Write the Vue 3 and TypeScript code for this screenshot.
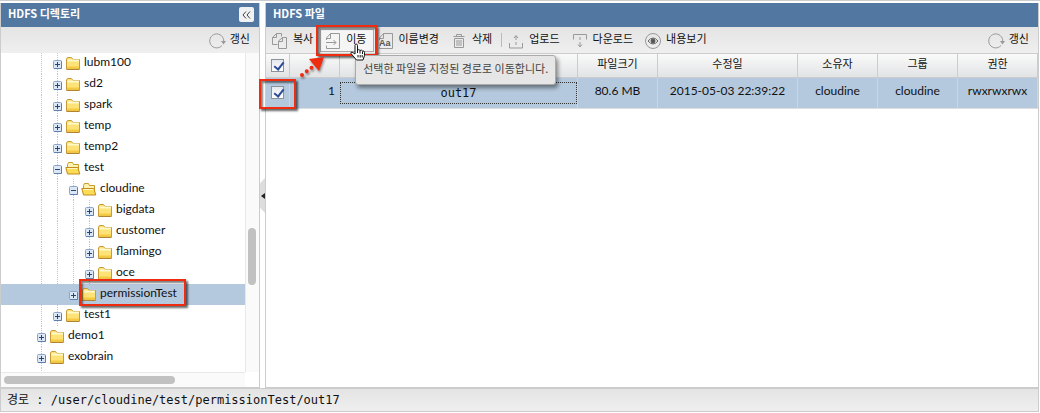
<script setup lang="ts">
interface TreeRow {
  name: string
  depth: number
  lines: number
  open?: boolean
  selected?: boolean
}

const rows: TreeRow[] = [
  { name: 'lubm100', depth: 3, lines: 1 },
  { name: 'sd2', depth: 3, lines: 1 },
  { name: 'spark', depth: 3, lines: 1 },
  { name: 'temp', depth: 3, lines: 1 },
  { name: 'temp2', depth: 3, lines: 1 },
  { name: 'test', depth: 3, lines: 1, open: true },
  { name: 'cloudine', depth: 4, lines: 2, open: true },
  { name: 'bigdata', depth: 5, lines: 3 },
  { name: 'customer', depth: 5, lines: 3 },
  { name: 'flamingo', depth: 5, lines: 3 },
  { name: 'oce', depth: 5, lines: 3 },
  { name: 'permissionTest', depth: 4, lines: 2, selected: true },
  { name: 'test1', depth: 3, lines: 1 },
  { name: 'demo1', depth: 2, lines: 0 },
  { name: 'exobrain', depth: 2, lines: 0 },
  { name: 'hdfs', depth: 2, lines: 0 },
]

const columns = ['파일크기', '수정일', '소유자', '그룹', '권한']
const cells = ['80.6 MB', '2015-05-03 22:39:22', 'cloudine', 'cloudine', 'rwxrwxrwx']
</script>

<template>
  <div class="app">
    <main class="body">
      <section class="panel side">
        <header class="title">
          <h2>HDFS 디렉토리</h2>
          <button class="collapse" aria-label="접기">
            <svg width="9" height="8" viewBox="0 0 9 8"><path d="M4 .5 1 4l3 3.500M8 .5 5 4l3 3.500" /></svg>
          </button>
        </header>
        <div class="toolbar end">
          <button class="tool">
            <svg class="ico" width="16" height="16" viewBox="0 0 16 16"><path d="M13 12.500a7 7 0 1 1 1.700-4" /><path class="fill" d="m12 8 5 0-2.500 3.500z" /></svg>
            <span>갱신</span>
          </button>
        </div>
        <div class="tree-area">
          <ul class="tree">
            <li v-for="r in rows" :key="r.name" class="node" :class="{ selected: r.selected }">
              <i v-for="n in r.depth" :key="n" class="cell" :class="{ line: n > 2 && n <= r.lines + 2 }"></i>
              <button class="cell line elbow" :aria-label="r.name">
                <svg width="9" height="9" viewBox="0 0 9 9">
                  <rect x=".5" y=".5" width="8" height="8" rx="1" fill="#dce7f5" stroke="#8da5c8" />
                  <path d="M1 8.500h7.500v-7" stroke="#5f7faf" fill="none" />
                  <path :d="r.open ? 'M2 4.500h5' : 'M2 4.500h5M4.500 2v5'" stroke="#26466f" />
                </svg>
              </button>
              <span class="label">
                <svg class="folder" width="16" height="15" viewBox="0 0 16 15">
                  <template v-if="r.open">
                    <path d="M2.500 12V3.500l1-2h4l1 2h5V12z" fill="#fff3b0" stroke="#c99a2c" />
                    <path d="M.8 6.500h12l2 6.500H2.500z" fill="#fbdc55" stroke="#c08a1c" />
                    <path d="M2 7.500h10.500" stroke="#fff6c0" />
                  </template>
                  <template v-else>
                    <path d="M1.500 12V3l1-1.500h4L8 3.500h6.500V13h-13z" fill="#fde377" stroke="#c99a38" />
                    <path d="M2.500 4.500H14" stroke="#fff8cb" stroke-width="2" />
                    <path d="M2 11.500h12" stroke="#f5ca40" stroke-width="2" />
                    <path d="M1.500 13.500h13" stroke="#b08430" />
                  </template>
                </svg>
                <span>{{ r.name }}</span>
                <i v-if="r.selected" class="mark"></i>
              </span>
            </li>
          </ul>
          <div class="vbar"><i></i></div>
        </div>
        <div class="hbar"><i></i></div>
      </section>

      <div class="splitter">
        <button aria-label="패널 접기"><svg width="4" height="6" viewBox="0 0 4 6"><path d="M4 0v6L0 3z" fill="#222" /></svg></button>
      </div>

      <section class="panel files">
        <header class="title"><h2>HDFS 파일</h2></header>
        <div class="toolbar">
          <button class="tool copy">
            <svg class="ico" width="16" height="16" viewBox="0 0 16 16"><path d="M5.500 11.500h-5V4.500l4-4h5v3M.5 4.500h4v-4M6.500 15.500V8l4-3.500h4v11zM6.500 8.500h4v-4" /></svg>
            <span>복사</span>
          </button>
          <div class="hot">
            <button class="tool move">
              <svg class="ico" width="16" height="16" viewBox="0 0 16 16"><path d="M1.500 7V5l4-4.500h9v15h-13v-3M1.500 5.500h4v-5M1 9.500h10M8.500 7 11 9.500 8.500 12" /></svg>
              <span>이동</span>
            </button>
            <i class="mark"></i>
            <svg class="cursor" width="16" height="18" viewBox="0 0 16 18">
              <path d="M5 11V2.500q0-1.500 1.200-1.500T7.500 2.500V7q1.500-1 2.500.5 1.500-1 2.500.5 2-.5 2 1.500v3l-1.500 4.500H6.500L1 10.500q-.5-1.500 1-1.500z" fill="#fff" stroke="#111" />
              <path d="M7.500 7v3M10 8v2.500M12.500 8.500V11M8 12v2.500M10.200 12v2.500M12.200 12v2.500" stroke="#111" fill="none" />
            </svg>
            <div class="tip" role="tooltip">선택한 파일을 지정된 경로로 이동합니다.</div>
          </div>
          <button class="tool rename">
            <svg class="ico" width="16" height="16" viewBox="0 0 16 16"><path d="M1.500 7V5l4-4.500h9v15h-13V14M1.500 5.500h4v-5" /><text x="1" y="13">Aa</text></svg>
            <span>이름변경</span>
          </button>
          <button class="tool delete">
            <svg class="ico" width="16" height="16" viewBox="0 0 16 16"><path d="M2.500 3.500h11M5.500 3V1.500h5V3M3.500 5.500v9h9v-9zM6 7v6M8 7v6M10 7v6" /></svg>
            <span>삭제</span>
          </button>
          <i class="sep"></i>
          <button class="tool upload">
            <svg class="ico" width="16" height="16" viewBox="0 0 16 16"><path d="M1.500 10v5h13v-5M8 9v3M8 7V3M6 5l2-2.500L10 5" /></svg>
            <span>업로드</span>
          </button>
          <button class="tool download">
            <svg class="ico" width="16" height="16" viewBox="0 0 16 16"><path d="M1.500 6.500v-5h13v5M8 4v3M8 9v4M6 11.500 8 14l2-2.500" /></svg>
            <span>다운로드</span>
          </button>
          <button class="tool view">
            <svg class="ico" width="16" height="16" viewBox="0 0 16 16"><circle cx="8" cy="8" r="7.500" /><path d="M3 8q5-6 10 0-5 6-10 0z" stroke="#666" /><circle cx="8" cy="8" r="2" fill="#555" stroke="#555" /></svg>
            <span>내용보기</span>
          </button>
          <button class="tool refresh">
            <svg class="ico" width="16" height="16" viewBox="0 0 16 16"><path d="M13 12.500a7 7 0 1 1 1.700-4" /><path class="fill" d="m12 8 5 0-2.500 3.500z" /></svg>
            <span>갱신</span>
          </button>
        </div>
        <table>
          <colgroup>
            <col class="c-check" /><col class="c-num" /><col /><col class="c-s" /><col class="c-date" /><col class="c-s" /><col class="c-s" /><col class="c-s" />
          </colgroup>
          <thead>
            <tr>
              <th><input type="checkbox" checked aria-label="전체 선택" /></th>
              <th></th>
              <th></th>
              <th v-for="c in columns" :key="c">{{ c }}</th>
            </tr>
          </thead>
          <tbody>
            <tr>
              <td class="pick">
                <input type="checkbox" checked aria-label="out17" />
                <i class="mark"></i>
                <svg class="arrow" width="32" height="26" viewBox="0 0 32 26">
                  <path d="M5 20 18 10" fill="none" stroke="#f02c10" stroke-width="4" stroke-linecap="round" stroke-dasharray="0 6" />
                  <path d="M27 2 22 16 12 4z" fill="#f02c10" />
                </svg>
              </td>
              <td class="num">1</td>
              <td class="file"><span>out17</span></td>
              <td v-for="(c, i) in cells" :key="i">{{ c }}</td>
            </tr>
          </tbody>
        </table>
      </section>
    </main>
    <footer class="status">경로 : /user/cloudine/test/permissionTest/out17</footer>
  </div>
</template>

<style>
body { margin: 0; }
</style>

<style scoped>
* { box-sizing: border-box; }
.app {
  display: flex;
  flex-direction: column;
  height: 100vh;
  padding: 2px 1px 1px 0;
  background: #fff;
  border-top: 1px solid #ccc;
  color: #111;
  font: 12px/16px Lato, "Noto Sans CJK KR", sans-serif;
}
button {
  margin: 0;
  padding: 0;
  border: 0;
  background: none;
  color: inherit;
  font: inherit;
}
i { display: block; }
svg { display: block; flex: none; }
.body { display: flex; flex: 1; min-height: 0; }
.panel {
  display: flex;
  flex-direction: column;
  border: 1px solid #ccc;
  border-top: 0;
  min-width: 0;
}
.side { width: 260px; }
.files { flex: 1; }
.title {
  display: flex;
  flex: none;
  justify-content: space-between;
  height: 24px;
  padding: 2px 5px 0 7px;
  background: #5278a2;
  color: #fff;
}
.title h2 { margin: 0; font: 700 11px/16px "Noto Sans CJK KR", sans-serif; }
.collapse {
  display: grid;
  place-items: center;
  width: 15px;
  height: 15px;
  margin-top: 2px;
  border-radius: 2px;
  background: #f0f1f3;
}
.collapse path { fill: none; stroke: #444; }
.toolbar {
  display: flex;
  flex: none;
  align-items: center;
  height: 26px;
  padding: 0 9px 0 6px;
  background: linear-gradient(#e4e4e4, #efefef);
}
.end { justify-content: flex-end; }
.tool {
  display: flex;
  align-items: center;
  gap: 5px;
  white-space: nowrap;
  font-size: 11px;
  color: #111;
}
.tool span { margin-top: -3px; }
.ico { margin-top: 2px; fill: none; stroke: #999; overflow: visible; }
.ico .fill { fill: #999; stroke: none; }
.ico text { fill: #555; stroke: none; font: bold 9px "Liberation Sans", sans-serif; }

.tree-area { display: flex; flex: 1; min-height: 0; }
.tree { flex: 1; margin: 0; padding: 0; overflow: hidden; list-style: none; }
.node { display: flex; height: 21px; }
.selected { background: #b5c9de; }
.cell { display: grid; flex: none; place-items: center; width: 16px; height: 21px; padding-top: 2px; }
.line {
  background: repeating-linear-gradient(#c4c4c4 0 1px, transparent 1px 2px) 8px 0 / 1px 100% no-repeat;
}
.label { position: relative; display: flex; align-items: center; gap: 3px; }
.label > span { margin-top: -4px; }
.mark {
  position: absolute;
  border: 2px solid #f02c10;
  box-shadow: 2px 2px 2px rgba(0, 0, 0, 0.6), inset 2px 2px 2px rgba(0, 0, 0, 0.5);
  pointer-events: none;
}
.label .mark { inset: -5px -9px -1px -2px; }
.vbar { width: 14px; padding: 175px 3px 0 2px; border-left: 1px solid #e8e8e8; background: #fafafa; }
.vbar i { height: 57px; border-radius: 4px; background: #c1c1c1; }
.hbar { flex: none; height: 15px; margin-right: 14px; padding: 3px; border-top: 1px solid #e8e8e8; background: #fafafa; }
.hbar i { width: 171px; height: 8px; border-radius: 4px; background: #c1c1c1; }

.splitter { display: flex; align-items: center; width: 5px; }
.splitter button {
  display: grid;
  place-items: center;
  width: 5px;
  height: 35px;
  background: #ddd;
  clip-path: polygon(0 15%, 100% 0, 100% 100%, 0 85%);
}

.hot { position: relative; margin: 0 4px 0 7px; }
.hot .mark { inset: -4px -3px -4px -4px; }
.move { height: 23px; padding: 0 6px 0 4px; border: 1px solid #aaa; background: #f5f5f5; }
.cursor { position: absolute; z-index: 3; left: 30px; top: 14px; }
.tip {
  position: absolute;
  z-index: 2;
  left: 35px;
  top: 26px;
  padding: 4px 7px 8px;
  border: 1px solid #aaa;
  border-radius: 3px;
  background: #e6e6e6;
  box-shadow: 2px 3px 4px rgba(0, 0, 0, 0.45);
  white-space: nowrap;
  color: #444;
  font: 11px/16px "Noto Sans CJK KR", sans-serif;
}
.delete { margin-left: 12px; }
.sep { width: 1px; height: 14px; margin: 0 6px 0 9px; background: #bbb; }
.download, .view { margin-left: 12px; }
.refresh { margin-left: auto; }

table { width: 100%; border-collapse: separate; border-spacing: 0; table-layout: fixed; }
.c-check { width: 24px; }
.c-num { width: 50px; }
.c-s { width: 80px; }
.c-date { width: 140px; }
th {
  height: 25px;
  padding: 0 0 4px;
  border: solid #ccc;
  border-width: 1px 1px 1px 0;
  background: linear-gradient(#fafafa, #e2e3e5);
  font-size: 11px;
  font-weight: 400;
}
td {
  height: 31px;
  padding: 0 0 4px;
  border-right: 1px solid #d0d4d8;
  border-bottom: 1px solid #ddd;
  background: #b5c9de;
  text-align: center;
}
.num { padding-right: 5px; border-right: 0; text-align: right; }
.file { padding: 0; }
.file span {
  display: block;
  padding: 2px;
  border: 1px dotted #333;
  font: 12px/16px "DejaVu Sans Mono", monospace;
}
input {
  display: block;
  appearance: none;
  width: 13px;
  height: 13px;
  margin: 3px auto 0;
  border: 1px solid #8a929c;
  background: linear-gradient(#e4e8ee, #fff);
}
input:checked::after {
  content: "";
  display: block;
  width: 4px;
  height: 8px;
  margin: 0 0 0 4px;
  border: solid #2c4a98;
  border-width: 0 2px 2px 0;
  transform: rotate(38deg);
}
.pick { position: relative; }
.pick .mark { inset: 1px -7px -1px -7px; }
.arrow { position: absolute; z-index: 1; left: 31px; top: -23px; filter: drop-shadow(1px 2px 1px rgba(0, 0, 0, 0.4)); }

.status {
  flex: none;
  height: 24px;
  padding: 3px 6px;
  border: 1px solid #ccc;
  background: linear-gradient(#e4e4e4, #efefef);
  font: 12px/16px "DejaVu Sans Mono", "Noto Sans CJK KR", monospace;
}
</style>
